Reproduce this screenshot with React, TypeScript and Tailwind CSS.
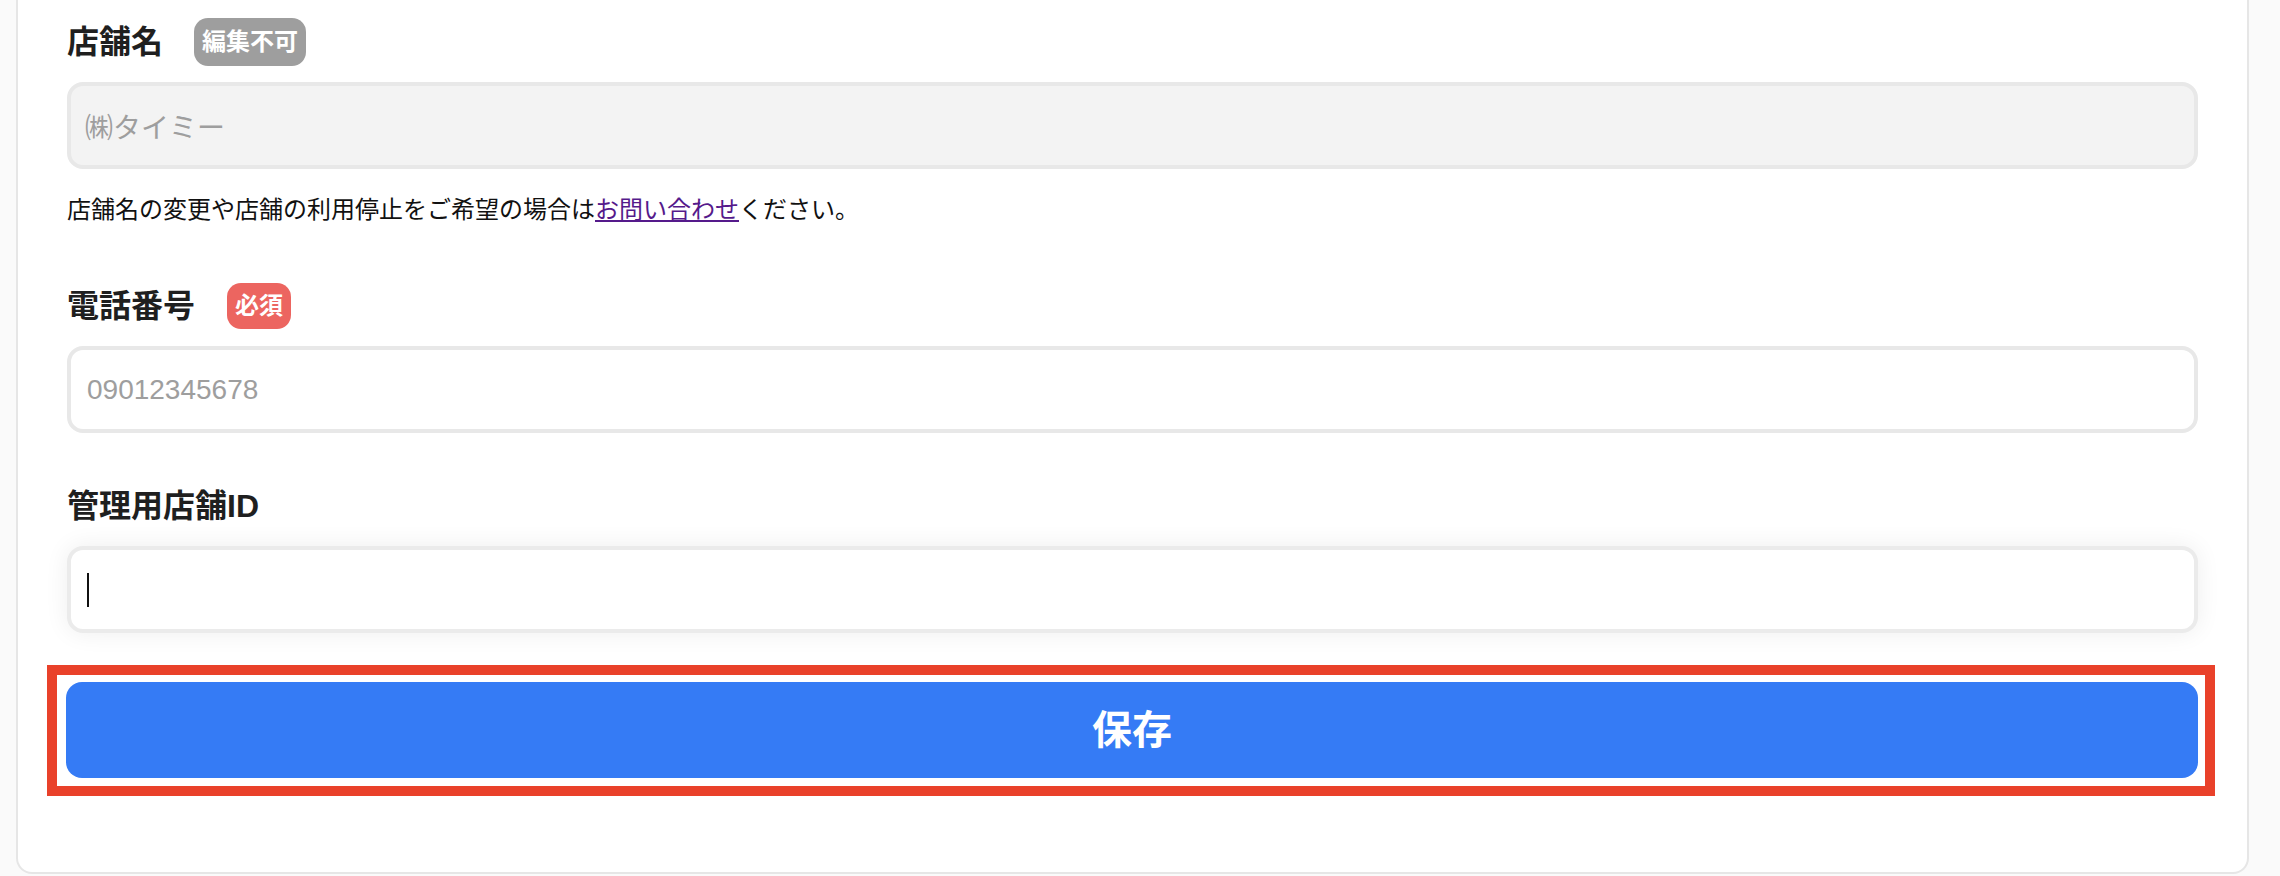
export default function App() {
    const font = { fontFamily: '"Liberation Sans", "Noto Sans CJK JP", sans-serif' }
    return (
        <div className="min-h-screen bg-[#fafafa] pl-[16px] pr-[31px]" style={font}>
            <div className="flex flex-col bg-white border-x-2 border-b-2 border-[#e6e6e6] rounded-b-[16px] px-[49px] pt-[18px] pb-[76px] text-[#1f1f1f]">
                <div className="flex items-center h-[48px]">
                    <span className="text-[32px] font-bold leading-none">店舗名</span>
                    <span className="ml-[31px] h-[48px] px-[8px] flex items-center rounded-[14px] bg-[#9e9e9e] text-white text-[24px] font-bold leading-none">編集不可</span>
                </div>
                <input
                    readOnly
                    value="㈱タイミー"
                    className="mt-[16px] h-[87px] w-full rounded-[16px] border-4 border-[#e8e8e8] bg-[#f3f3f3] pl-[14px] text-[28px] text-[#9e9e9e] outline-none"
                />
                <p className="mt-[23px] h-[36px] leading-[36px] text-[24px] text-[#111]">
                    店舗名の変更や店舗の利用停止をご希望の場合は<a href="#" className="text-[#551a8b] underline">お問い合わせ</a>ください。
                </p>

                <div className="mt-[54px] flex items-center h-[48px]">
                    <span className="text-[32px] font-bold leading-none">電話番号</span>
                    <span className="ml-[32px] h-[46px] px-[8px] flex items-center rounded-[14px] bg-[#ec6560] text-white text-[24px] font-bold leading-none">必須</span>
                </div>
                <input
                    placeholder="09012345678"
                    className="mt-[16px] h-[87px] w-full rounded-[16px] border-4 border-[#e8e8e8] bg-white pl-[16px] text-[28px] placeholder:text-[#9e9e9e] outline-none"
                />

                <div className="mt-[49px] flex items-center h-[48px]">
                    <span className="text-[32px] font-bold leading-none">管理用店舗ID</span>
                </div>
                <div className="mt-[16px] h-[87px] w-full rounded-[16px] border-4 border-[#ebebeb] bg-white pl-[16px] flex items-center shadow-[0_0_24px_rgba(0,0,0,0.07)]">
                    <span className="w-[2px] h-[34px] bg-[#111]"></span>
                </div>

                <div className="mt-[32px] -ml-[20px] -mr-[17px] border-[10px] border-[#e9412a] pl-[9px] pr-[7px] pt-[7px] pb-[8px]">
                    <button className="w-full h-[96px] rounded-[16px] bg-[#357bf5] text-white text-[40px] font-bold">
                        保存
                    </button>
                </div>
            </div>
        </div>
    )
}
